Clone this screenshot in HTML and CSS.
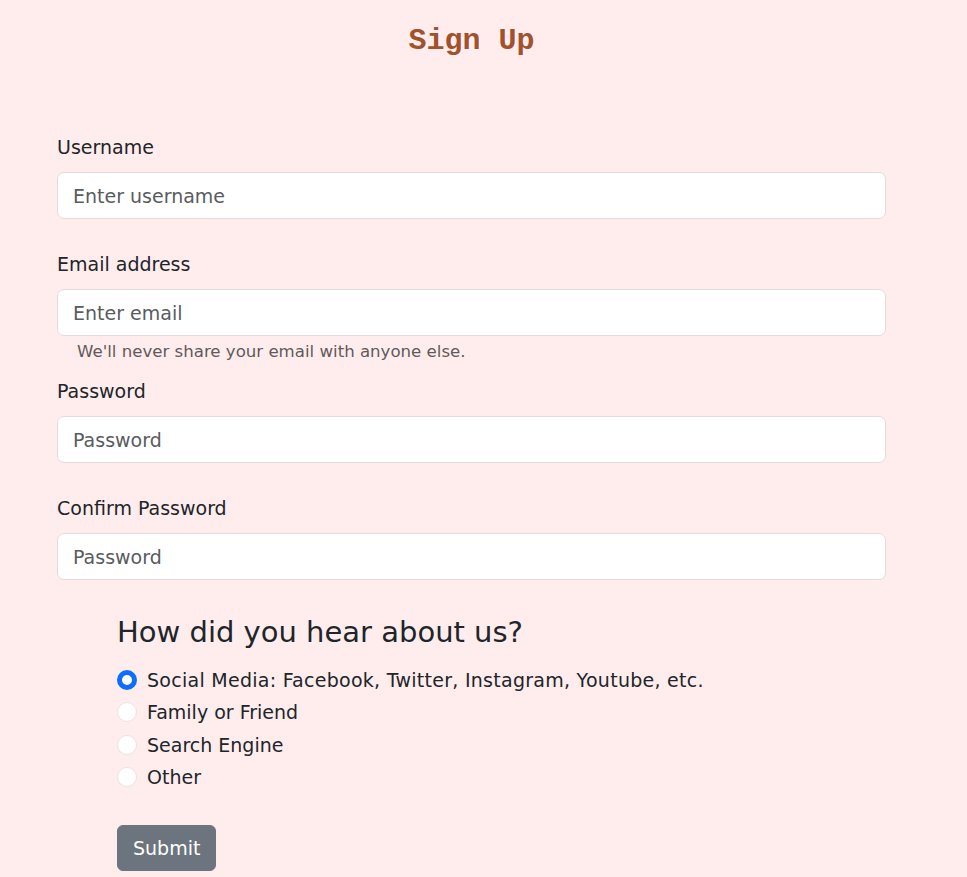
FILE: index.html
```html
<!DOCTYPE html>
<html lang="en">
<head>
<meta charset="utf-8">
<title>Sign Up</title>
<link rel="stylesheet" href="styles.css">
</head>
<body>
<div class="page">
  <h1 class="title">Sign Up</h1>
  <form class="form">
    <div class="group">
      <label class="label" for="username">Username</label>
      <input class="control" id="username" type="text" placeholder="Enter username">
    </div>
    <div class="group group-help">
      <label class="label" for="email">Email address</label>
      <input class="control" id="email" type="email" placeholder="Enter email">
      <div class="help">We'll never share your email with anyone else.</div>
    </div>
    <div class="group">
      <label class="label" for="pw">Password</label>
      <input class="control" id="pw" type="password" placeholder="Password">
    </div>
    <div class="group">
      <label class="label" for="pw2">Confirm Password</label>
      <input class="control" id="pw2" type="password" placeholder="Password">
    </div>
    <div class="survey">
      <h3 class="survey-title">How did you hear about us?</h3>
      <div class="options">
        <label class="option"><input class="radio" type="radio" name="src" checked><span class="option-text wide">Social Media: Facebook, Twitter, Instagram, Youtube, etc.</span></label>
        <label class="option"><input class="radio" type="radio" name="src"><span class="option-text">Family or Friend</span></label>
        <label class="option"><input class="radio" type="radio" name="src"><span class="option-text">Search Engine</span></label>
        <label class="option"><input class="radio" type="radio" name="src"><span class="option-text">Other</span></label>
      </div>
      <button class="submit" type="button">Submit</button>
    </div>
  </form>
</div>
</body>
</html>
```

FILE: styles.css
```css
html, body {
  margin: 0;
  padding: 0;
}
body {
  background: #ffeded;
  font-family: "DejaVu Sans", sans-serif;
  font-size: 19px;
  color: #212529;
}
.page {
  width: 829px;
  margin-left: 57px;
}
.title {
  margin: 0;
  padding-top: 23px;
  height: 36px;
  line-height: 36px;
  text-align: center;
  font-family: "Liberation Mono", "Courier New", monospace;
  font-weight: bold;
  font-size: 30px;
  color: #a0522d;
}
.form {
  margin-top: 73px;
  display: flex;
  flex-direction: column;
}
.group {
  display: flex;
  flex-direction: column;
  margin-bottom: 30px;
}
.group-help {
  margin-bottom: 14px;
}
.label {
  line-height: 30px;
  margin-bottom: 10px;
}
.control {
  box-sizing: border-box;
  height: 47px;
  width: 100%;
  padding: 0 15px;
  border: 1px solid #e4dcdc;
  border-radius: 7px;
  background: #fff;
  font-family: "DejaVu Sans", sans-serif;
  font-size: 19px;
  color: #212529;
  outline: none;
}
.control::placeholder {
  color: #595c5f;
  opacity: 1;
}
.help {
  margin-top: 5px;
  margin-left: 20px;
  font-size: 16.6px;
  line-height: 21px;
  color: #5f5a5b;
}
.survey {
  margin-left: 60px;
  margin-top: 5px;
}
.survey-title {
  margin: 0;
  font-weight: normal;
  font-size: 29px;
  line-height: 35px;
}
.options {
  margin-top: 14px;
  display: flex;
  flex-direction: column;
}
.option {
  display: flex;
  align-items: center;
  gap: 10px;
  height: 32.33px;
}
.option-text.wide {
  letter-spacing: 0.27px;
}
.radio {
  appearance: none;
  -webkit-appearance: none;
  margin: 0;
  width: 20px;
  height: 20px;
  border-radius: 50%;
  border: 1px solid #ece2e2;
  background: #fff;
  box-sizing: border-box;
}
.radio:checked {
  border: 5px solid #0d6efd;
  background: #fff;
}
.submit {
  margin-top: 32px;
  box-sizing: border-box;
  height: 46px;
  padding: 0 15px;
  border: 1px solid #6c757d;
  border-radius: 6px;
  background: #6c757d;
  color: #fff;
  font-family: "DejaVu Sans", sans-serif;
  font-size: 19px;
}
```
